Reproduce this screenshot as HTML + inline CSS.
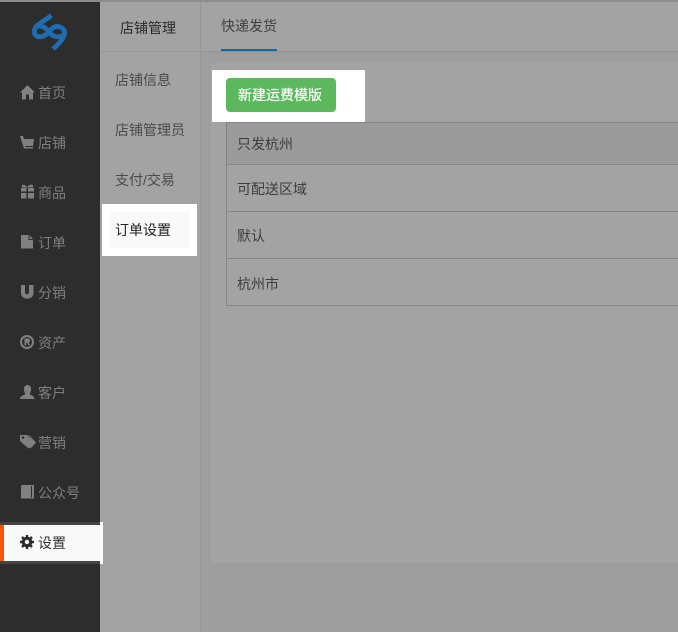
<!DOCTYPE html>
<html lang="zh">
<head>
<meta charset="utf-8">
<title>设置</title>
<style>
html,body{margin:0;padding:0}
body{width:678px;height:632px;overflow:hidden;position:relative;background:#9e9e9e;font-family:"Liberation Sans","Noto Sans CJK SC",sans-serif;font-size:14px}
div,span,svg{position:absolute}
.t{white-space:nowrap;line-height:20px}
.nav{left:38px;color:#7f7f7f;font-size:14px}
.sub{left:115px;color:#4a4a4a;font-size:14px}
.cell{left:237px;color:#3d3d3d;font-size:14px}
.line{left:226px;width:452px;height:1px;background:#858585}
svg{overflow:visible}
</style>
</head>
<body>
<div style="left:0;top:0;width:678px;height:2px;background:#8c8c8c"></div>
<!-- sidebar -->
<div style="left:0;top:2px;width:100px;height:630px;background:#2d2d2d"></div>
<!-- subnav -->
<div style="left:100px;top:2px;width:100px;height:630px;background:#a3a3a3"></div>
<div style="left:200px;top:2px;width:1px;height:630px;background:#959595"></div>
<div style="left:100px;top:51px;width:100px;height:1px;background:#969696"></div>
<!-- header -->
<div style="left:201px;top:2px;width:477px;height:49px;background:#a3a3a3"></div>
<div style="left:201px;top:51px;width:477px;height:1px;background:#939393"></div>
<div style="left:221px;top:49px;width:56px;height:2px;background:#0f6aa0"></div>
<div class="t" style="left:221px;top:16px;color:#3f3f3f">快递发货</div>
<!-- card -->
<div style="left:211px;top:63px;width:467px;height:500px;background:#a3a3a3"></div>
<!-- table -->
<div style="left:226px;top:122px;width:452px;height:42px;background:#9b9b9b"></div>
<div style="left:226px;top:122px;width:1px;height:184px;background:#858585"></div>
<div class="line" style="top:122px"></div>
<div class="line" style="top:164px"></div>
<div class="line" style="top:211px"></div>
<div class="line" style="top:258px"></div>
<div class="line" style="top:305px"></div>
<div class="t cell" style="top:134px">只发杭州</div>
<div class="t cell" style="top:179px">可配送区域</div>
<div class="t cell" style="top:226px">默认</div>
<div class="t cell" style="top:274px">杭州市</div>
<!-- button highlight -->
<div style="left:212px;top:70px;width:153px;height:52px;background:#fff"></div>
<div style="left:226px;top:78px;width:110px;height:34px;background:#5cb85c;border-radius:4px"></div>
<div class="t" style="left:238px;top:85px;color:#fff;-webkit-text-stroke:0.2px #fff">新建运费模版</div>
<!-- subnav text -->
<div class="t" style="left:120px;top:18px;color:#2a2a2a">店铺管理</div>
<div class="t sub" style="left:115px;top:70px">店铺信息</div>
<div class="t sub" style="left:115px;top:120px">店铺管理员</div>
<div class="t sub" style="left:115px;top:170px">支付/交易</div>
<div style="left:102px;top:204px;width:95px;height:52px;background:#fff"></div>
<div style="left:110px;top:212px;width:80px;height:36px;background:#f9f9f9"></div>
<div class="t" style="left:115px;top:220px;color:#222">订单设置</div>
<!-- logo -->
<svg style="left:0;top:0" width="100" height="60" viewBox="0 0 100 60" fill="none" stroke="#1f6cb0" stroke-width="4.800">
<path d="M51.500 15.500 L38.500 24.500 C32 29 33.500 37 40 36.800 C46 36.600 49 31 53 27.800 C57 25 63.500 27 64.500 32 C65.300 37 60 43 53 49"/>
<path d="M37 26.500 C42 24.500 46 28 49 32 C52 36 57 38.500 63 35.500"/>
</svg>
<!-- nav icons -->
<svg style="left:0;top:0" width="100" height="520" viewBox="0 0 100 520" fill="#808080">
<path d="M27.500 85 L20 92.500 L22 92.500 L22 99.500 L26 99.500 L26 94.500 L29 94.500 L29 99.500 L33 99.500 L33 92.500 L35 92.500 Z"/>
<path d="M20 136 L23 136 L24 139 L34 139 L33 146 L25.500 146 L25.500 147 L33 147 L33 148.500 L24 148.500 Z"/>
<path d="M21 188 H26.500 V191.500 H21 Z M28 188 H34 V191.500 H28 Z M21 193 H26.500 V198.500 H21 Z M28 193 H34 V198.500 H28 Z M22 185.500 C23 184 26 185 27 187 C28.500 185 31.500 184 33 185.500 C33.500 186.500 33 187.500 32 187.500 H23 C22 187.500 21.500 186.500 22 185.500 Z"/>
<path d="M21 235 H28.500 V240 H33 V248.500 H21 Z M29.500 235 L33 239 H29.500 Z"/>
<path d="M21 285 H25 V292.500 C25 295 29 295 29 292.500 V285 H33.500 V293 C33.500 300.500 21 300.500 21 293 Z"/>
<path d="M27 335 A7 7 0 1 0 27.010 349 A7 7 0 1 0 27 335 Z M27 337 A5 5 0 1 1 26.990 347 A5 5 0 1 1 27 337 Z" fill-rule="evenodd"/>
<path d="M24.500 338.500 H28 C30.500 338.500 30.500 342 28.800 342.500 L30.200 345.300 H28.500 L27.200 342.800 H26.200 V345.300 H24.500 Z"/>
<path d="M27.500 385 C30.500 385 31.500 388 31 390.500 C30.700 392 30 393 29.500 394 C31 395.500 34.500 395.500 34.500 399 H20 C20 395.500 24 395.500 25.500 394 C25 393 24.300 392 24 390.500 C23.500 388 24.500 385 27.500 385 Z"/>
<path d="M20 435 H27 L34.500 442.500 L28.500 448.500 L20 441 Z"/>
<path d="M29 435 L36 442.500 L30.500 448.500 L29.500 447.500 L34 442.500 L28 435 Z"/>
<path d="M22 485 H34 V498.500 H21 V486 Z"/>
</svg>
<svg style="left:0;top:0" width="100" height="520" viewBox="0 0 100 520">
<circle cx="23" cy="437.500" r="1.300" fill="#2d2d2d"/>
<path d="M31.500 486 V497.500" stroke="#2d2d2d" stroke-width="1"/>
</svg>
<div class="t nav" style="top:83px">首页</div>
<div class="t nav" style="top:133px">店铺</div>
<div class="t nav" style="top:183px">商品</div>
<div class="t nav" style="top:233px">订单</div>
<div class="t nav" style="top:283px">分销</div>
<div class="t nav" style="top:333px">资产</div>
<div class="t nav" style="top:383px">客户</div>
<div class="t nav" style="top:433px">营销</div>
<div class="t nav" style="top:483px">公众号</div>
<!-- active item -->
<div style="left:0;top:522px;width:103px;height:42px;background:#fff"></div>
<div style="left:0;top:522px;width:100px;height:3px;background:#444"></div>
<div style="left:0;top:561px;width:100px;height:3px;background:#444"></div>
<div style="left:0;top:525px;width:100px;height:36px;background:#f9f9f9"></div>
<div style="left:0;top:525px;width:4px;height:36px;background:#ff5500"></div>
<svg style="left:20px;top:535px" width="14" height="14" viewBox="0 0 14 14">
<circle cx="7" cy="7" r="3.800" fill="none" stroke="#2b2b2b" stroke-width="3"/>
<path d="M7 0 V14 M0 7 H14 M2 2 L12 12 M12 2 L2 12" stroke="#2b2b2b" stroke-width="2.400"/>
<circle cx="7" cy="7" r="2.200" fill="#f9f9f9"/>
</svg>
<div class="t" style="left:38px;top:533px;color:#333">设置</div>
</body>
</html>
